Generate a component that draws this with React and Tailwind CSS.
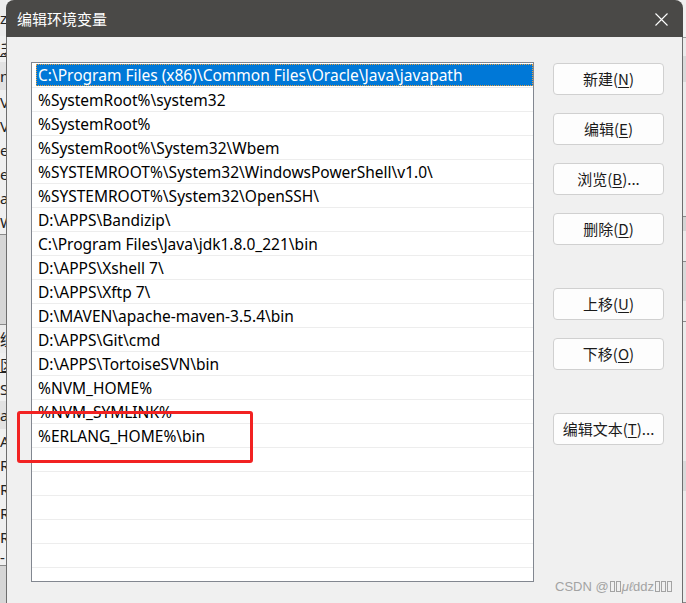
const FONT = '"Noto Sans", "Noto Sans CJK SC", sans-serif';
const CJK = '"Noto Sans CJK SC", "Noto Sans", sans-serif';

const items = [
  "C:\\Program Files (x86)\\Common Files\\Oracle\\Java\\javapath",
  "%SystemRoot%\\system32",
  "%SystemRoot%",
  "%SystemRoot%\\System32\\Wbem",
  "%SYSTEMROOT%\\System32\\WindowsPowerShell\\v1.0\\",
  "%SYSTEMROOT%\\System32\\OpenSSH\\",
  "D:\\APPS\\Bandizip\\",
  "C:\\Program Files\\Java\\jdk1.8.0_221\\bin",
  "D:\\APPS\\Xshell 7\\",
  "D:\\APPS\\Xftp 7\\",
  "D:\\MAVEN\\apache-maven-3.5.4\\bin",
  "D:\\APPS\\Git\\cmd",
  "D:\\APPS\\TortoiseSVN\\bin",
  "%NVM_HOME%",
  "%NVM_SYMLINK%",
  "%ERLANG_HOME%\\bin",
  "",
  "",
  "",
  "",
  "",
];

function Btn({ label, k, suffix = "", mt }) {
  return (
    <div
      className={`w-[111px] h-[32px] shrink-0 rounded-[4px] border border-[#d0d0d0] bg-[#fdfdfd] flex items-center justify-center text-[15px] text-[#1a1a1a] ${mt}`}
      style={{ fontFamily: CJK }}
    >
      <span>
        {label}(<span className="underline underline-offset-2">{k}</span>){suffix}
      </span>
    </div>
  );
}

function LeftStrip() {
  const top = [
    { h: 36, t: "zl", bg: "bg-[#ececec]" },
    { h: 26, t: "乏", bg: "bg-[#f0f0f0]", u: true },
    { h: 28, t: "nt", bg: "bg-[#e2e2e2]" },
    { h: 24, t: "V", bg: "bg-[#f0f0f0]" },
    { h: 24, t: "V", bg: "bg-[#f0f0f0]" },
    { h: 24, t: "er", bg: "bg-[#f0f0f0]" },
    { h: 24, t: "er", bg: "bg-[#f0f0f0]" },
    { h: 24, t: "a", bg: "bg-[#f0f0f0]" },
    { h: 24, t: "W", bg: "bg-[#f0f0f0]" },
  ];
  const bottom = [
    { h: 28, t: "统", bg: "bg-[#ececec]" },
    { h: 24, t: "区", bg: "bg-[#f0f0f0]", u: true },
    { h: 24, t: "S", bg: "bg-[#f0f0f0]" },
    { h: 28, t: "a", bg: "bg-[#e2e2e2]" },
    { h: 24, t: "A", bg: "bg-[#f0f0f0]" },
    { h: 24, t: "R", bg: "bg-[#f0f0f0]" },
    { h: 24, t: "R", bg: "bg-[#f0f0f0]" },
    { h: 24, t: "R", bg: "bg-[#f0f0f0]" },
    { h: 24, t: "R", bg: "bg-[#f0f0f0]" },
    { h: 16, t: "-", bg: "bg-[#f0f0f0]" },
  ];
  const cell = (r, i) => (
    <div
      key={i}
      className={`shrink-0 overflow-hidden whitespace-nowrap text-[15px] text-[#222] flex items-center ${r.bg}`}
      style={{ height: r.h, fontFamily: FONT }}
    >
      <span className={r.u ? "underline" : ""}>{r.t}</span>
    </div>
  );
  return (
    <div className="w-[6px] h-full shrink-0 flex flex-col overflow-hidden bg-[#dadada]">
      {top.map(cell)}
      <div className="h-[90px] shrink-0 border-t border-[#8a8a8a] bg-[#d6d6d6]" />
      <div className="shrink-0 border-t border-[#8a8a8a]">{bottom.map(cell)}</div>
      <div className="flex-1 border-t border-[#8a8a8a] bg-[#d6d6d6]" />
    </div>
  );
}

function RightStrip() {
  return (
    <div className="w-[3px] h-full shrink-0 flex flex-col bg-[#ebebeb]">
      <div className="h-[38px] shrink-0 bg-[#f0f0f0] border-b border-[#9a9a9a]" />
      <div className="h-[18px] shrink-0" />
      <div className="h-[26px] shrink-0 bg-[#d9d9d9]" />
      <div className="h-[134px] shrink-0" />
      <div className="h-[15px] shrink-0 bg-[#d4d4d4] border-t border-[#8a8a8a]" />
      <div className="h-[30px] shrink-0" />
      <div className="h-[40px] shrink-0 bg-[#d9d9d9] border-t border-[#8a8a8a]" />
      <div className="h-[20px] shrink-0" />
      <div className="h-[140px] shrink-0 border-t border-[#8a8a8a]" />
      <div className="h-[30px] shrink-0 bg-[#d9d9d9]" />
      <div className="flex-1 border-b border-[#8a8a8a]" />
    </div>
  );
}

export default function App() {
  return (
    <div className="w-[686px] h-[603px] flex overflow-hidden bg-[#f0f0f0] relative">
      <LeftStrip />
      <div className="w-[677px] h-full shrink-0 flex flex-col">
        <div className="h-[37px] shrink-0 bg-[#4a4947] rounded-t-[8px] flex items-center justify-between pl-[11px] pr-[15px]">
          <span className="text-white text-[15px] leading-none" style={{ fontFamily: CJK }}>
            编辑环境变量
          </span>
          <svg width="13" height="13" viewBox="0 0 13 13" className="mt-px">
            <path d="M0.5 0.5 L12.5 12.5 M12.5 0.5 L0.5 12.5" stroke="#ffffff" strokeWidth="1.1" fill="none" />
          </svg>
        </div>
        <div className="flex-1 bg-[#f0f0f0] border-l border-r border-[#6e6e6e] flex pl-[24px] pt-[25px] gap-[19px]">
          <div className="w-[503px] h-[520px] shrink-0 border border-[#828790] bg-white pt-px overflow-hidden">
            {items.map((t, i) => (
              <div
                key={i}
                className="h-[24px] border-b border-[#ededed] flex items-stretch"
              >
                {i === 0 ? (
                  <div
                    className="flex-1 ml-[4px] mb-px bg-[#0078d7] text-white text-[15.5px] flex items-center pl-[2px] pt-[2px] whitespace-nowrap outline-1 outline-dotted outline-[#e8a040] -outline-offset-1"
                    style={{ fontFamily: FONT }}
                  >
                    {t}
                  </div>
                ) : (
                  <div
                    className="flex-1 pl-[6px] pt-[2px] text-black text-[15.5px] flex items-center whitespace-nowrap"
                    style={{ fontFamily: FONT }}
                  >
                    {t}
                  </div>
                )}
              </div>
            ))}
          </div>
          <div className="flex flex-col pt-px">
            <Btn label="新建" k="N" />
            <Btn label="编辑" k="E" mt="mt-[18px]" />
            <Btn label="浏览" k="B" suffix="..." mt="mt-[18px]" />
            <Btn label="删除" k="D" mt="mt-[18px]" />
            <Btn label="上移" k="U" mt="mt-[43px]" />
            <Btn label="下移" k="O" mt="mt-[18px]" />
            <Btn label="编辑文本" k="T" suffix="..." mt="mt-[43px]" />
          </div>
        </div>
      </div>
      <RightStrip />

      <div className="absolute left-[17px] top-[411px] w-[236px] h-[52px] border-[3px] border-[#f22222] rounded-[3px] pointer-events-none" />

      <div
        className="absolute left-[555px] top-[577px] text-[13px] text-[#a3a3a3] flex items-center whitespace-nowrap"
        style={{ fontFamily: '"Liberation Sans", Arial, sans-serif' }}
      >
        <span>CSDN @</span>
        <span className="inline-block w-[5px] h-[11px] border border-[#a3a3a3] ml-px" />
        <span className="inline-block w-[5px] h-[11px] border border-[#a3a3a3] ml-px" />
        <span className="italic ml-px">μℓ</span>
        <span>ddz</span>
        <span className="inline-block w-[5px] h-[11px] border border-[#a3a3a3] ml-px" />
        <span className="inline-block w-[5px] h-[11px] border border-[#a3a3a3] ml-px" />
        <span className="inline-block w-[5px] h-[11px] border border-[#a3a3a3] ml-px" />
      </div>
    </div>
  );
}
